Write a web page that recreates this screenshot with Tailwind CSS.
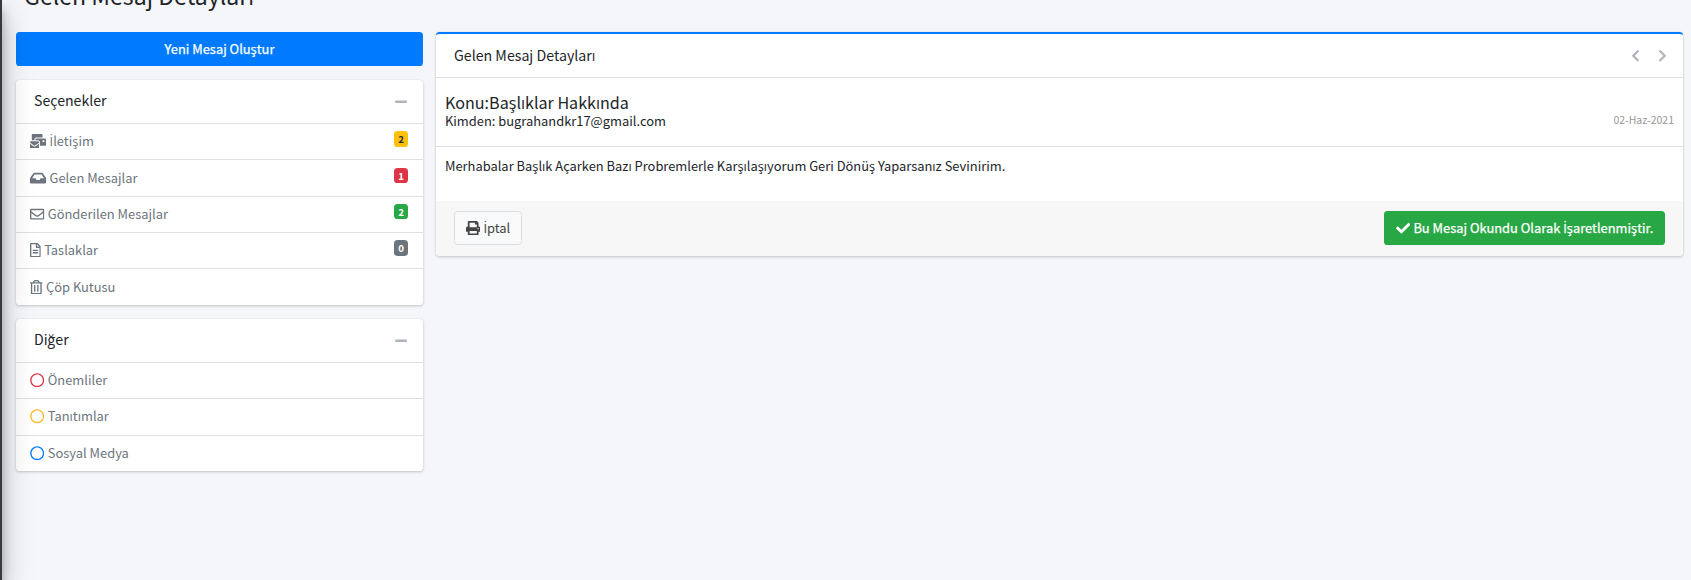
<!DOCTYPE html>
<html lang="tr">
<head>
<meta charset="utf-8">
<title>Gelen Mesaj Detayları</title>
<script src="https://cdn.jsdelivr.net/npm/@tailwindcss/browser@4"></script>
</head>
<body class="relative h-[580px] overflow-hidden bg-[#f4f6f9] font-['Noto_Sans_CJK_SC','Open_Sans',sans-serif] text-[12.9px] leading-5 text-[#212529]">
<svg class="hidden">
  <symbol id="bulk" viewBox="0 0 576 512"><path d="M160 448c-25.6 0-51.2-22.4-64-32-64-44.8-83.2-60.8-96-70.4V480c0 17.67 14.33 32 32 32h256c17.67 0 32-14.33 32-32V345.6c-12.8 9.6-32 25.6-96 70.4-12.8 9.6-38.4 32-64 32zm128-192H32c-17.67 0-32 14.33-32 32v16c25.6 19.2 22.4 19.2 115.2 86.4 9.6 6.4 28.8 25.6 44.8 25.6s35.2-19.2 44.8-22.4c92.8-67.2 89.6-67.2 115.2-86.4V288c0-17.67-14.33-32-32-32zm256-96H224c-17.67 0-32 14.33-32 32v32h96c33.21 0 60.59 25.42 63.71 57.82l.29-.22V416h192c17.67 0 32-14.33 32-32V192c0-17.67-14.33-32-32-32zm-32 128h-64v-64h64v64zm-352-96c0-35.29 28.71-64 64-64h224V32c0-17.67-14.33-32-32-32H96C78.33 0 64 14.33 64 32v192h96v-32z"/></symbol>
  <symbol id="inbox" viewBox="0 0 576 512"><path d="M567.938 243.908L462.25 85.374A48.003 48.003 0 0 0 422.311 64H153.689a48 48 0 0 0-39.938 21.374L8.062 243.908A47.994 47.994 0 0 0 0 270.533V400c0 26.51 21.49 48 48 48h480c26.51 0 48-21.49 48-48V270.533a47.994 47.994 0 0 0-8.062-26.625zM162.252 128h251.497l85.333 128H376l-32 64H232l-32-64H76.918l85.334-128z"/></symbol>
  <symbol id="mail" viewBox="0 0 512 512"><path d="M464 64H48C21.49 64 0 85.49 0 112v288c0 26.51 21.49 48 48 48h416c26.51 0 48-21.49 48-48V112c0-26.51-21.49-48-48-48zm0 48v40.805c-22.422 18.259-58.168 46.651-134.587 106.49-16.841 13.247-50.201 45.072-73.413 44.701-23.208.375-56.579-31.459-73.413-44.701C106.18 199.465 70.425 171.067 48 152.805V112h416zM48 400V214.398c22.914 18.251 55.409 43.862 104.938 82.646 21.857 17.205 60.134 55.186 103.062 54.955 42.717.231 80.509-37.199 103.053-54.947 49.528-38.783 82.032-64.401 104.947-82.653V400H48z"/></symbol>
  <symbol id="file" viewBox="0 0 384 512"><path d="M288 248v28c0 6.600-5.400 12-12 12H108c-6.600 0-12-5.400-12-12v-28c0-6.600 5.400-12 12-12h168c6.600 0 12 5.400 12 12zm-12 72H108c-6.600 0-12 5.400-12 12v28c0 6.600 5.400 12 12 12h168c6.600 0 12-5.400 12-12v-28c0-6.600-5.400-12-12-12zm108-188.100V464c0 26.500-21.500 48-48 48H48c-26.500 0-48-21.500-48-48V48C0 21.500 21.500 0 48 0h204.100C264.800 0 277 5.100 286 14.100L369.900 98c9 8.900 14.100 21.200 14.100 33.900zm-128-80V128h76.100L256 51.900zM336 464V176H232c-13.300 0-24-10.700-24-24V48H48v416h288z"/></symbol>
  <symbol id="trash" viewBox="0 0 448 512"><path d="M268 416h24a12 12 0 0 0 12-12V188a12 12 0 0 0-12-12h-24a12 12 0 0 0-12 12v216a12 12 0 0 0 12 12zM432 80h-82.410l-34-56.700A48 48 0 0 0 274.410 0H173.590a48 48 0 0 0-41.160 23.300L98.410 80H16A16 16 0 0 0 0 96v16a16 16 0 0 0 16 16h16v336a48 48 0 0 0 48 48h288a48 48 0 0 0 48-48V128h16a16 16 0 0 0 16-16V96a16 16 0 0 0-16-16zM171.840 50.910A6 6 0 0 1 177 48h94a6 6 0 0 1 5.150 2.910L293.610 80H154.390zM368 464H80V128h288zm-212-48h24a12 12 0 0 0 12-12V188a12 12 0 0 0-12-12h-24a12 12 0 0 0-12 12v216a12 12 0 0 0 12 12z"/></symbol>
  <symbol id="circle" viewBox="0 0 512 512"><path d="M256 8C119 8 8 119 8 256s111 248 248 248 248-111 248-248S393 8 256 8zm0 448c-110.500 0-200-89.500-200-200S145.500 56 256 56s200 89.500 200 200-89.500 200-200 200z"/></symbol>
  <symbol id="print" viewBox="0 0 512 512"><path d="M448 192V77.250c0-8.490-3.370-16.620-9.370-22.630L393.370 9.370c-6-6-14.140-9.370-22.630-9.370H96C78.330 0 64 14.330 64 32v160c-35.350 0-64 28.650-64 64v112c0 8.840 7.160 16 16 16h48v96c0 17.670 14.330 32 32 32h320c17.670 0 32-14.330 32-32v-96h48c8.840 0 16-7.160 16-16V256c0-35.350-28.650-64-64-64zm-64 256H128v-96h256v96zm0-224H128V64h192v48c0 8.840 7.160 16 16 16h48v96zm48 72c-13.250 0-24-10.750-24-24 0-13.260 10.750-24 24-24s24 10.740 24 24c0 13.250-10.750 24-24 24z"/></symbol>
  <symbol id="check" viewBox="0 0 512 512"><path d="M173.898 439.404l-166.400-166.400c-9.997-9.997-9.997-26.206 0-36.204l36.203-36.204c9.997-9.998 26.207-9.998 36.204 0L192 312.690 432.095 72.596c9.997-9.997 26.207-9.997 36.204 0l36.203 36.204c9.997 9.997 9.997 26.206 0 36.204l-294.400 294.401c-9.998 9.997-26.207 9.997-36.204-.001z"/></symbol>
  <symbol id="left" viewBox="0 0 320 512"><path d="M34.520 239.030L228.870 44.690c9.370-9.370 24.570-9.370 33.940 0l22.670 22.670c9.360 9.360 9.370 24.520.040 33.900L131.490 256l154.020 154.750c9.340 9.380 9.320 24.540-.040 33.900l-22.670 22.670c-9.370 9.370-24.570 9.370-33.940 0L34.520 272.970c-9.370-9.370-9.370-24.570 0-33.940z"/></symbol>
  <symbol id="minus" viewBox="0 0 448 512"><path d="M416 208H32c-17.670 0-32 14.330-32 32v32c0 17.670 14.330 32 32 32h384c17.670 0 32-14.330 32-32v-32c0-17.670-14.330-32-32-32z"/></symbol>
</svg>

<header class="flex h-8 pl-6">
  <h1 class="-mt-[21px] h-8 text-[23.1px] leading-8">Gelen Mesaj Detayları</h1>
</header>

<main class="flex items-start gap-[13px] pl-4">
  <aside class="flex w-[407px] flex-col gap-[14px]">
    <button class="flex h-[34px] items-center justify-center rounded-[3.6px] bg-[#007bff] text-white [-webkit-text-stroke:0.25px_white]"><span>Yeni Mesaj Oluştur</span></button>

    <section class="rounded-[3.6px] bg-white shadow-[0_0_1px_rgba(0,0,0,.125),0_1px_3px_rgba(0,0,0,.2)]">
      <div class="flex h-[44px] items-center justify-between border-b border-[#dfdfdf] pl-[18px] pr-[16.500px]">
        <h3 class="mb-[3px] text-[14.15px]">Seçenekler</h3>
        <svg class="mt-[1px] h-[13.500px] w-[12px] fill-[#adb5bd]"><use href="#minus"/></svg>
      </div>
      <ul class="text-[#6c757d]">
        <li class="flex h-[36px] border-b border-[#dfdfdf] pl-[14.400px] pr-[15px]">
          <svg class="mr-[3px] mt-[10px] h-[14.400px] w-[16.200px] fill-current"><use href="#bulk"/></svg>
          <span class="mt-[7px]"><span class="font-['Open_Sans']">İ</span>letişim</span>
          <span class="ml-auto mt-[7px] flex h-4 w-[14px] items-center justify-center rounded-[3.6px] bg-[#ffc107] text-[9.7px] font-bold text-[#1f2d3d]">2</span>
        </li>
        <li class="flex h-[37px] border-b border-[#dfdfdf] pl-[14.400px] pr-[15px]">
          <svg class="mr-[3px] mt-[11px] h-[14.400px] w-[16.200px] fill-current"><use href="#inbox"/></svg>
          <span class="mt-2">Gelen Mesajlar</span>
          <span class="ml-auto mt-2 flex h-[15px] w-[14px] items-center justify-center rounded-[3.6px] bg-[#dc3545] text-[9.7px] font-bold text-white">1</span>
        </li>
        <li class="flex h-[36px] border-b border-[#dfdfdf] pl-[14.400px] pr-[15px]">
          <svg class="mr-[3px] mt-[10px] h-[14.400px] w-[14.400px] fill-current"><use href="#mail"/></svg>
          <span class="mt-[7px]">Gönderilen Mesajlar</span>
          <span class="ml-auto mt-[7px] flex h-[15px] w-[14px] items-center justify-center rounded-[3.6px] bg-[#28a745] text-[9.7px] font-bold text-white">2</span>
        </li>
        <li class="flex h-[36px] border-b border-[#dfdfdf] pl-[14.400px] pr-[15px]">
          <svg class="mr-[3px] mt-[10px] h-[14.400px] w-[10.800px] fill-current"><use href="#file"/></svg>
          <span class="mt-[7px]">Taslaklar</span>
          <span class="ml-auto mt-[7px] flex h-4 w-[14px] items-center justify-center rounded-[3.6px] bg-[#6c757d] text-[9.7px] font-bold text-white">0</span>
        </li>
        <li class="flex h-[36px] pl-[14.400px] pr-[15px]">
          <svg class="mr-[3px] mt-[11px] h-[14.400px] w-[12.600px] fill-current"><use href="#trash"/></svg>
          <span class="mt-2">Çöp Kutusu</span>
        </li>
      </ul>
    </section>

    <section class="rounded-[3.6px] bg-white shadow-[0_0_1px_rgba(0,0,0,.125),0_1px_3px_rgba(0,0,0,.2)]">
      <div class="flex h-[44px] items-center justify-between border-b border-[#dfdfdf] pl-[18px] pr-[16.500px]">
        <h3 class="mb-[3px] text-[14.15px]">Diğer</h3>
        <svg class="mt-[1px] h-[13.500px] w-[12px] fill-[#adb5bd]"><use href="#minus"/></svg>
      </div>
      <ul class="text-[#6c757d]">
        <li class="flex h-[36px] border-b border-[#dfdfdf] pl-[14.400px]">
          <svg class="mr-[3px] mt-[10px] size-[14.400px] fill-[#dc3545]"><use href="#circle"/></svg>
          <span class="mt-[7px]">Önemliler</span>
        </li>
        <li class="flex h-[37px] border-b border-[#dfdfdf] pl-[14.400px]">
          <svg class="mr-[3px] mt-[10px] size-[14.400px] fill-[#ffb62e]"><use href="#circle"/></svg>
          <span class="mt-[7px]">Tanıtımlar</span>
        </li>
        <li class="flex h-[35px] pl-[14.400px]">
          <svg class="mr-[3px] mt-[10px] size-[14.400px] fill-[#007bff]"><use href="#circle"/></svg>
          <span class="mt-[7px]">Sosyal Medya</span>
        </li>
      </ul>
    </section>
  </aside>

  <section class="w-[1247px] overflow-hidden rounded-[3.6px] border-t-2 border-[#007bff] bg-white shadow-[0_0_1px_rgba(0,0,0,.125),0_1px_3px_rgba(0,0,0,.2)]">
    <div class="flex h-[44px] items-center justify-between border-b border-[#dfdfdf] pl-[18px] pr-[16.500px]">
      <h3 class="mb-[2px] text-[14.2px]">Gelen Mesaj Detayları</h3>
      <div class="flex gap-[18px]">
        <svg class="h-[13.500px] w-[9px] fill-[#adb5bd]"><use href="#left"/></svg>
        <svg class="h-[13.500px] w-[9px] -scale-x-100 fill-[#adb5bd]"><use href="#left"/></svg>
      </div>
    </div>
    <div class="h-[69px] border-b border-[#dfdfdf] pl-[9px] pr-[9px] pt-[15px]">
      <h5 class="h-[19px] text-[16.1px] leading-[18px]">Konu:Başlıklar Hakkında</h5>
      <div class="flex h-5 items-start justify-between">
        <h6 class="leading-[18px]">Kimden: bugrahandkr17@gmail.com</h6>
        <span class="text-[10.5px] leading-4 text-[#999]">02-Haz-2021</span>
      </div>
    </div>
    <p class="h-[54px] pl-[9px] pt-[9px]">Merhabalar Başlık Açarken Bazı Probremlerle Karşılaşıyorum Geri Dönüş Yaparsanız Sevinirim.</p>
    <div class="flex h-[55px] items-start justify-between bg-[#f7f7f7] pl-[18px] pr-[18px] pt-[10px]">
      <button class="flex h-[34px] w-[68px] items-center gap-[3px] rounded-[3.6px] border border-[#ddd] bg-[#f8f9fa] pl-[11px] text-[#444]">
        <svg class="size-[14.400px] fill-current"><use href="#print"/></svg>
        <span><span class="font-['Open_Sans']">İ</span>ptal</span>
      </button>
      <button class="flex h-[34px] w-[281px] items-center gap-[3px] whitespace-nowrap rounded-[3.6px] bg-[#28a745] pl-3 text-white [-webkit-text-stroke:0.25px_white]">
        <svg class="size-[14.400px] fill-current"><use href="#check"/></svg>
        <span>Bu Mesaj Okundu Olarak <span class="font-['Open_Sans']">İ</span>şaretlenmiştir.</span>
      </button>
    </div>
  </section>
</main>

<!-- Edge of the collapsed sidebar with its shadow over the content -->
<div class="pointer-events-none absolute inset-y-0 -left-[223px] w-[225px] bg-[#343a40] shadow-[0_14px_28px_rgba(0,0,0,.25),0_10px_10px_rgba(0,0,0,.22),0_-14px_28px_rgba(0,0,0,.02)]"></div>
</body>
</html>
